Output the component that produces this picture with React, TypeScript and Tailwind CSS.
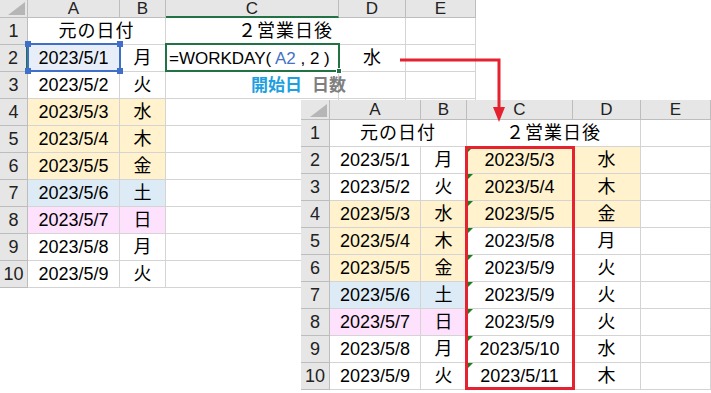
import type { ReactNode } from "react";

type Cell = {
  w: string;
  t?: ReactNode;
  bg?: string;
  left?: boolean;
  flag?: boolean;
};

const Y = "bg-[#fff2cc]";
const BL = "bg-[#ddebf7]";
const PK = "bg-[#fde1fd]";

const HeaderCell = ({ w, t, cls = "" }: { w: string; t?: string; cls?: string }) => (
  <div
    className={`flex shrink-0 items-center justify-center border-r border-b border-[#bdbdbd] bg-[#e6e6e6] text-[17px] leading-none text-[#222] ${w} ${cls}`}
  >
    {t}
  </div>
);

const Corner = ({ w }: { w: string }) => (
  <div className={`relative shrink-0 border-r border-b border-[#bdbdbd] bg-[#e6e6e6] ${w}`}>
    <div className="absolute right-[2px] bottom-[2px] h-[13px] w-[17px] bg-[#b6b6b6] [clip-path:polygon(100%_0,100%_100%,0_100%)]" />
  </div>
);

const GridRow = ({
  num,
  numW,
  cells,
  numCls = "",
}: {
  num: number;
  numW: string;
  cells: Cell[];
  numCls?: string;
}) => (
  <div className="flex h-[27px]">
    <div
      className={`flex shrink-0 items-center justify-center border-r border-b border-[#bdbdbd] bg-[#e6e6e6] text-[18px] leading-none text-[#222] ${numW} ${numCls}`}
    >
      {num}
    </div>
    {cells.map((c, i) => (
      <div
        key={i}
        className={`relative flex shrink-0 items-center border-r border-b border-[#d4d4d4] text-[18px] leading-none whitespace-nowrap text-black ${c.w} ${c.bg ?? ""} ${
          c.left ? "justify-start pl-[3px]" : "justify-center"
        }`}
      >
        {c.flag && (
          <span className="absolute top-0 left-0 h-[6px] w-[6px] bg-[#1b7d1b] [clip-path:polygon(0_0,100%_0,0_100%)]" />
        )}
        {c.t}
      </div>
    ))}
  </div>
);

const leftData: [string, string, string][] = [
  ["2023/5/2", "火", ""],
  ["2023/5/3", "水", Y],
  ["2023/5/4", "木", Y],
  ["2023/5/5", "金", Y],
  ["2023/5/6", "土", BL],
  ["2023/5/7", "日", PK],
  ["2023/5/8", "月", ""],
  ["2023/5/9", "火", ""],
];

const rightData: [string, string, string, string, string, string][] = [
  ["2023/5/1", "月", "", "2023/5/3", "水", Y],
  ["2023/5/2", "火", "", "2023/5/4", "木", Y],
  ["2023/5/3", "水", Y, "2023/5/5", "金", Y],
  ["2023/5/4", "木", Y, "2023/5/8", "月", ""],
  ["2023/5/5", "金", Y, "2023/5/9", "火", ""],
  ["2023/5/6", "土", BL, "2023/5/9", "火", ""],
  ["2023/5/7", "日", PK, "2023/5/9", "火", ""],
  ["2023/5/8", "月", "", "2023/5/10", "水", ""],
  ["2023/5/9", "火", "", "2023/5/11", "木", ""],
];

function LeftSheet() {
  return (
    <div className="w-[476px] overflow-hidden bg-white">
      <div className="flex h-[18px]">
        <Corner w="w-[28px]" />
        <HeaderCell w="w-[92px]" t="A" />
        <HeaderCell w="w-[46px]" t="B" />
        <HeaderCell w="w-[173px]" t="C" cls="bg-[#d2d2d2] text-[#1e5e38] border-b-2 border-b-[#217346]" />
        <HeaderCell w="w-[67px]" t="D" />
        <HeaderCell w="w-[70px]" t="E" />
      </div>
      <GridRow
        num={1}
        numW="w-[28px]"
        cells={[
          { w: "w-[138px]", t: <span className="tracking-[1px]">元の日付</span> },
          { w: "w-[240px]", t: <span className="tracking-[1px]">２営業日後</span> },
          { w: "w-[70px]" },
        ]}
      />
      <GridRow
        num={2}
        numW="w-[28px]"
        numCls="bg-[#d2d2d2] text-[#3c6e4c] border-r-2 border-r-[#217346]"
        cells={[
          { w: "w-[92px]", t: "2023/5/1", bg: "bg-[#e8eef8]" },
          { w: "w-[46px]", t: "月" },
          {
            w: "w-[173px]",
            left: true,
            t: (
              <span className="text-[17px]">
                =WORKDAY( <span className="text-[#4472c4]">A2</span> , 2 )
              </span>
            ),
          },
          { w: "w-[67px]", t: "水" },
          { w: "w-[70px]" },
        ]}
      />
      {leftData.map(([d, wd, bg], i) => (
        <GridRow
          key={d}
          num={i + 3}
          numW="w-[28px]"
          cells={[
            { w: "w-[92px]", t: d, bg },
            { w: "w-[46px]", t: wd, bg },
            i === 0
              ? {
                  w: "w-[173px]",
                  left: true,
                  t: (
                    <span className="flex gap-[10px] pl-[82px] text-[17px] font-bold">
                      <span className="text-[#1ea0e0]">開始日</span>
                      <span className="text-[#7f7f7f]">日数</span>
                    </span>
                  ),
                }
              : { w: "w-[173px]" },
            { w: "w-[67px]" },
            { w: "w-[70px]" },
          ]}
        />
      ))}
    </div>
  );
}

function RightSheet() {
  return (
    <div className="absolute top-[100px] left-[301px] w-[410px] overflow-hidden bg-white">
      <div className="flex h-[20px]">
        <Corner w="w-[29px]" />
        <HeaderCell w="w-[91px]" t="A" />
        <HeaderCell w="w-[46px]" t="B" />
        <HeaderCell w="w-[106px]" t="C" />
        <HeaderCell w="w-[68px]" t="D" />
        <HeaderCell w="w-[70px]" t="E" />
      </div>
      <GridRow
        num={1}
        numW="w-[29px]"
        cells={[
          { w: "w-[137px]", t: <span className="tracking-[1px]">元の日付</span> },
          { w: "w-[174px]", t: <span className="tracking-[1px]">２営業日後</span> },
          { w: "w-[70px]" },
        ]}
      />
      {rightData.map(([d, wd, bg, r, rwd, rbg], i) => (
        <GridRow
          key={d}
          num={i + 2}
          numW="w-[29px]"
          cells={[
            { w: "w-[91px]", t: d, bg },
            { w: "w-[46px]", t: wd, bg },
            { w: "w-[106px]", t: r, bg: rbg, flag: true },
            { w: "w-[68px]", t: rwd, bg: rbg },
            { w: "w-[70px]" },
          ]}
        />
      ))}
    </div>
  );
}

export default function App() {
  return (
    <div className="relative h-[393px] w-[711px] overflow-hidden bg-white font-['Liberation_Sans','Noto_Sans_CJK_JP',sans-serif]">
      <LeftSheet />

      {/* reference frame around A2 */}
      <div className="pointer-events-none absolute top-[43px] left-[27px] h-[29px] w-[94px] border-2 border-[#3f6fc9]">
        <span className="absolute -top-[4px] -left-[4px] h-[6px] w-[6px] bg-[#3f6fc9]" />
        <span className="absolute -top-[4px] -right-[4px] h-[6px] w-[6px] bg-[#3f6fc9]" />
        <span className="absolute -bottom-[4px] -left-[4px] h-[6px] w-[6px] bg-[#3f6fc9]" />
        <span className="absolute -right-[4px] -bottom-[4px] h-[6px] w-[6px] bg-[#3f6fc9]" />
      </div>

      {/* active cell C2 */}
      <div className="pointer-events-none absolute top-[43px] left-[165px] h-[29px] w-[175px] border-2 border-[#217346]">
        <span className="absolute -right-[4px] -bottom-[4px] h-[6px] w-[6px] border border-white bg-[#217346]" />
      </div>

      <RightSheet />

      {/* result range */}
      <div className="pointer-events-none absolute top-[146px] left-[465px] h-[244px] w-[110px] border-[3px] border-[#e52330]" />

      {/* arrow */}
      <svg className="pointer-events-none absolute top-0 left-0" width="711" height="393">
        <polyline points="400,60 499,60 499,108" fill="none" stroke="#e52330" strokeWidth="3" />
        <polygon points="493,107 505,107 499,122" fill="#e52330" />
      </svg>
    </div>
  );
}
